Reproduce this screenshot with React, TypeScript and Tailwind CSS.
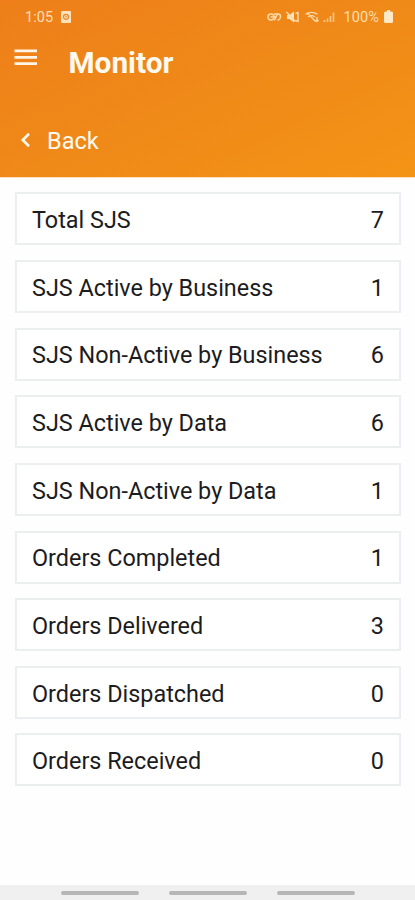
const rows: { label: string; value: number }[] = [
  { label: 'Total SJS', value: 7 },
  { label: 'SJS Active by Business', value: 1 },
  { label: 'SJS Non-Active by Business', value: 6 },
  { label: 'SJS Active by Data', value: 6 },
  { label: 'SJS Non-Active by Data', value: 1 },
  { label: 'Orders Completed', value: 1 },
  { label: 'Orders Delivered', value: 3 },
  { label: 'Orders Dispatched', value: 0 },
  { label: 'Orders Received', value: 0 },
];

function StatusBar() {
  return (
    <div className="flex h-8 items-center pl-[25px] pr-[22px] pt-0.5 text-[14.5px] leading-4 text-[#ffdfb4]">
      <span className="pt-px tracking-[0.1px]">1:05</span>
      <svg className="mb-px ml-[8px] h-[12px] w-[10px]" viewBox="0 0 10 12">
        <rect width="10" height="12" rx="1" fill="#ffe3bd" />
        <circle cx="5" cy="5.8" r="2.5" fill="none" stroke="#e98a2c" strokeWidth="1.3" />
        <circle cx="5" cy="5.8" r="0.8" fill="#e98a2c" />
      </svg>
      <svg className="mb-px ml-auto h-[16px] w-[69px]" viewBox="0 0 69 16" fill="none" stroke="#ffd9a6" strokeWidth="1.5">
        <circle cx="4" cy="8" r="3" />
        <path d="M3.500 8h5M7 5h3.500M7 11c2 0 2-6 4-6 1.800 0 2.500 1 2.500 2.500S12.500 11 10.500 11" />
        <path d="M20 6h2.500l4.500-3.500v11L22.500 10H20z" fill="#ffe3bd" stroke="none" />
        <path d="M19.500 3l9 9.500M28.500 4.500l2.500-1v9l-2.500-1" />
        <path d="M38.500 5.300c4-2.600 8-2.600 12 0M41 8c2.300-1.700 4.700-1.700 7 0M40 3.500l8.500 9M50 8v4.500m-1.500-1.500 1.500 1.500 1.500-1.500" strokeWidth="1.300" />
        <path d="M57.500 13v-2M60.500 13V9.500M63.500 13V7M66.500 13V3.500" opacity=".75" strokeWidth="1.700" />
      </svg>
      <span className="ml-[8px] pt-px tracking-[0.1px]">100%</span>
      <svg className="mb-px ml-[5px] h-[13px] w-[9px]" viewBox="0 0 9 13" fill="#ffe8c8">
        <path d="M3 0h3v1.500h1.500Q9 1.500 9 3v8.500Q9 13 7.500 13h-6Q0 13 0 11.500V3q0-1.500 1.500-1.500H3z" />
      </svg>
    </div>
  );
}

export default function App() {
  return (
    <div className="flex h-[900px] w-full flex-col overflow-hidden bg-[#fefefe] font-['Roboto',sans-serif]">
      <header className="flex h-[178px] shrink-0 flex-col border-b border-[#fde0bd] bg-linear-[155deg] from-[#ee7f1a] via-[#ef8918] to-[#f49416] text-[#fffaf0]">
        <StatusBar />
        <div className="flex h-[60px] items-center pl-[14px]">
          <svg className="mb-[10px] h-[17px] w-[24px]" viewBox="0 0 24 17" fill="#fff5e6">
            <path d="M.5 .5h22.500v2.800H.500zM.5 7h22.500v2.800H.500zM.5 13.300h22.500v2.800H.500z" />
          </svg>
          <h1 className="ml-[30.500px] pt-[2px] text-[29.800px] leading-9 font-bold">Monitor</h1>
        </div>
        <div className="mt-[30px] flex h-9 items-center pl-[20px]">
          <svg className="h-4 w-[11px]" viewBox="0 0 11 16" fill="none" stroke="#fff5e6" strokeWidth="2.800">
            <path d="M9 1.800 2.800 8 9 14.200" />
          </svg>
          <span className="ml-[16px] pt-[4px] text-[23.5px]">Back</span>
        </div>
      </header>
      <main className="flex flex-1 flex-col gap-[14.65px] px-[14.500px] pt-[14.300px]">
        {rows.map((row) => (
          <div
            key={row.label}
            className="flex h-[53px] items-center justify-between border-2 border-[#eceff0] bg-white pt-[3.600px] pr-[14.500px] pl-[15.500px] text-[23.400px] text-[#1c1c1e]"
          >
            <span>{row.label}</span>
            <span>{row.value}</span>
          </div>
        ))}
      </main>
      <nav className="flex h-[15px] shrink-0 justify-center gap-[30px] bg-[#f0f0f0] pt-[6px]">
        <span className="h-[3.500px] w-[78px] rounded-full bg-[#b7b7b7]" />
        <span className="h-[3.500px] w-[78px] rounded-full bg-[#b7b7b7]" />
        <span className="h-[3.500px] w-[78px] rounded-full bg-[#b7b7b7]" />
      </nav>
    </div>
  );
}
